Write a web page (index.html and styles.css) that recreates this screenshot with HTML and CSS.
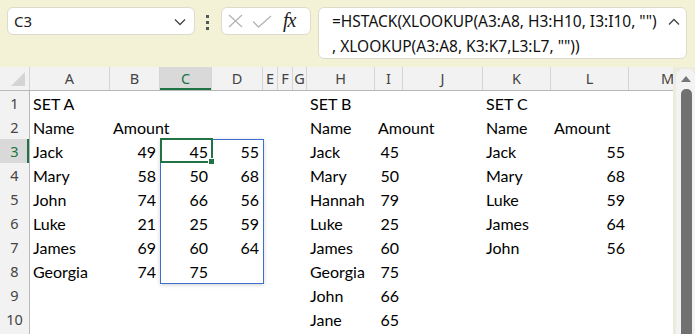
FILE: index.html
```html
<!DOCTYPE html>
<html>
<head lang="en">
<meta charset="UTF-8">
<title>Book1 - Excel</title>
<link rel="stylesheet" href="styles.css">
<script type="text/javascript">
  var COLS = ['A', 'B', 'C', 'D', 'E', 'F', 'G', 'H', 'I', 'J', 'K', 'L', 'M'];
  var ACTIVE_COL = 'C', ACTIVE_ROW = 3;
  var VISIBLE_ROWS = 10;  // row 11 only peeks out under the window edge
  // one array per sheet row, one entry per column A..M
  var DATA = [
    ['SET A', '', '', '', '', '', '', 'SET B', '', '', 'SET C', '', ''],
    ['Name', 'Amount', '', '', '', '', '', 'Name', 'Amount', '', 'Name', 'Amount', ''],
    ['Jack', 49, 45, 55, '', '', '', 'Jack', 45, '', 'Jack', 55, ''],
    ['Mary', 58, 50, 68, '', '', '', 'Mary', 50, '', 'Mary', 68, ''],
    ['John', 74, 66, 56, '', '', '', 'Hannah', 79, '', 'Luke', 59, ''],
    ['Luke', 21, 25, 59, '', '', '', 'Luke', 25, '', 'James', 64, ''],
    ['James', 69, 60, 64, '', '', '', 'James', 60, '', 'John', 56, ''],
    ['Georgia', 74, 75, '', '', '', '', 'Georgia', 75, '', '', '', ''],
    ['', '', '', '', '', '', '', 'John', 66, '', '', '', ''],
    ['', '', '', '', '', '', '', 'Jane', 65, '', '', '', ''],
    ['', '', '', '', '', '', '', '', '', '', '', '', '']
  ];

  window.onload = function() {
    var html = [];
    html.push('<div class="r hrow"><div class="corner"></div>');
    for (var c = 0; c < COLS.length; c++) {
      html.push('<div class="ch', COLS[c] == ACTIVE_COL ? ' sel' : '', '">',
                COLS[c], '</div>');
    }
    html.push('</div>');
    for (var i = 0; i < DATA.length; i++) {
      html.push('<div class="r"><div class="rh', i + 1 == ACTIVE_ROW ? ' sel' : '',
                '">', i < VISIBLE_ROWS ? i + 1 : '', '</div>');
      for (var j = 0; j < DATA[i].length; j++) {
        var v = DATA[i][j];
        html.push('<div class="cell', typeof(v) === 'number' ? ' num' : '', '">',
                  v, '</div>');
      }
      html.push('</div>');
    }
    html.push('<div class="spill"></div>');
    html.push('<div class="active"><i class="handle"></i></div>');
    document.getElementById('sheet').innerHTML = html.join('');
  };
</script>
</head>
<body>
  <div class="toolbar">
    <div class="namebox">
      <span>C3</span>
      <svg class="chev" width="12" height="8" viewBox="0 0 12 8">
        <path d="M1 1.5 L6 6.5 L11 1.5" fill="none" stroke="#444" stroke-width="1.3"/>
      </svg>
    </div>
    <div class="dots"><i></i><i></i><i></i></div>
    <div class="fxbox">
      <svg width="15" height="14" viewBox="0 0 15 14">
        <path d="M1 1 L14 13 M14 1 L1 13" stroke="#b5b5b5" stroke-width="1.3" fill="none"/>
      </svg>
      <svg width="20" height="13" viewBox="0 0 20 13">
        <path d="M1 6.5 L6.5 12 L19 1" stroke="#b5b5b5" stroke-width="1.3" fill="none"/>
      </svg>
      <span class="fx">fx</span>
    </div>
    <div class="formula">
      <div class="ftext">=HSTACK(XLOOKUP(A3:A8, H3:H10, I3:I10, "")<br>, XLOOKUP(A3:A8, K3:K7,L3:L7, ""))</div>
      <svg class="caret" width="12" height="8" viewBox="0 0 12 8">
        <path d="M1 6.5 L6 1.5 L11 6.5" fill="none" stroke="#444" stroke-width="1.3"/>
      </svg>
    </div>
  </div>

  <div class="main">
    <div class="sheet" id="sheet"></div>
    <div class="vscroll">
      <div class="track">
        <span class="arrow"></span>
        <div class="thumb"></div>
      </div>
    </div>
  </div>
</body>
</html>
```

FILE: styles.css
```css
html, body {
margin: 0;
padding: 0;
overflow: hidden;
}
body {
width: 695px;
height: 334px;
background: #fff;
font-family: Lato, sans-serif;
color: #000;
}
.toolbar {
display: flex;
align-items: flex-start;
height: 67px;
box-sizing: border-box;
padding: 7px 0 0 7px;
background: #f3f1d6;
}
.namebox, .fxbox, .formula {
background: #fff;
border: 1px solid #dcdcc8;
border-radius: 6px;
box-sizing: border-box;
}
.namebox {
display: flex;
align-items: center;
justify-content: space-between;
width: 188px;
height: 28px;
padding: 0 8px 0 6px;
font-family: "Noto Sans", sans-serif;
font-size: 15px;
color: #222;
}
.chev { margin-top: 2px; }
.dots {
display: flex;
flex-direction: column;
gap: 3px;
margin: 8px 12px 0 11px;
}
.dots i {
display: block;
width: 3px;
height: 3px;
background: #555;
}
.fxbox {
display: flex;
align-items: center;
width: 90px;
height: 28px;
padding: 0 0 0 6px;
}
.fxbox svg { margin-right: 9px; }
.fxbox svg + svg { margin-right: 11px; }
.fx {
font-family: "Liberation Serif", serif;
font-style: italic;
font-size: 20px;
color: #222;
letter-spacing: -1px;
margin-top: -2px;
}
.formula {
display: flex;
justify-content: space-between;
margin-left: 7px;
width: 369px;
height: 52px;
padding: 1px 6px 0 13px;
}
.ftext {
font-family: "Noto Sans", sans-serif;
font-size: 15.5px;
line-height: 24.5px;
color: #111;
white-space: nowrap;
}
.caret { margin-top: 9px; }

.main {
display: flex;
height: 267px;
}
.sheet {
position: relative;
width: 673px;
flex: none;
overflow: hidden;
}
.r {
display: grid;
grid-template-columns: 30px 80px 50px 52px 51px 15px 15px 14px 68px 28px 80px 68px 78px 78px;
height: 24px;
}
.hrow {
background: #f2f2f2;
border-bottom: 1px solid #b8b8b8;
box-sizing: border-box;
}
.corner {
position: relative;
border-right: 1px solid #d5d5d5;
}
.corner:after {
content: "";
position: absolute;
right: 4px;
bottom: 4px;
border-style: solid;
border-width: 0 0 14px 14px;
border-color: transparent transparent #d4d4d4 transparent;
}
.ch {
font-family: "Noto Sans", sans-serif;
font-size: 14.5px;
color: #444;
text-align: center;
line-height: 23px;
border-right: 1px solid #d5d5d5;
overflow: hidden;
}
.ch.sel {
background: #d9d9d9;
color: #217346;
box-shadow: inset 0 -2px 0 #217346;
}
.rh {
font-family: "Noto Sans", sans-serif;
font-size: 14.5px;
color: #444;
text-align: center;
line-height: 24px;
background: #f2f2f2;
border-right: 1px solid #b8b8b8;
border-bottom: 1px solid #d5d5d5;
box-sizing: border-box;
}
.rh.sel {
background: #d9d9d9;
color: #217346;
box-shadow: inset -2px 0 0 #217346;
}
.cell {
font-size: 16px;
line-height: 24px;
padding: 1px 4px 0 3px;
white-space: nowrap;
box-sizing: border-box;
}
.cell.num {
text-align: right;
}
.spill {
position: absolute;
left: 160px;
top: 72px;
width: 104px;
height: 145px;
box-sizing: border-box;
border: 1px solid #3c6fc9;
box-shadow: 0 1px 4px rgba(0,0,0,0.18);
pointer-events: none;
}
.active {
position: absolute;
left: 160px;
top: 71px;
width: 53px;
height: 25px;
box-sizing: border-box;
border: 2px solid #217346;
}
.handle {
position: absolute;
right: -4px;
bottom: -4px;
width: 5px;
height: 5px;
background: #217346;
border: 1px solid #fff;
}
.vscroll {
width: 22px;
background: #ecebde;
padding-left: 3px;
box-sizing: border-box;
}
.track {
position: relative;
height: 100%;
background: #f3f3f3;
border-radius: 8px 8px 0 0;
margin-top: 2px;
}
.arrow {
position: absolute;
left: 5px;
top: 7px;
border-style: solid;
border-width: 0 5px 6px 5px;
border-color: transparent transparent #777 transparent;
}
.thumb {
position: absolute;
left: 5px;
top: 20px;
width: 11px;
bottom: 0;
background: #717171;
border-radius: 5px 5px 0 0;
}
```
